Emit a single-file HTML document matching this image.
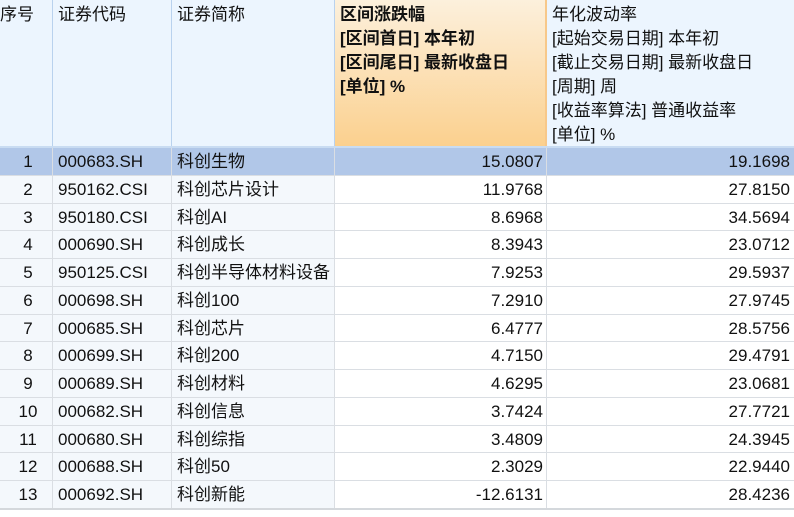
<!DOCTYPE html>
<html><head><meta charset="utf-8"><style>
*{margin:0;padding:0;box-sizing:border-box}
body{width:794px;height:517px;background:#fff;font-family:"Liberation Sans","Noto Sans CJK SC",sans-serif;font-size:17px;color:#111;position:relative;overflow:hidden}
.h{position:absolute;top:0;height:147px;background:#ecf5fe;border-right:1px solid #b9d2ee;padding:3px 5px 0 5px;line-height:24px;white-space:nowrap}
.hg{background:linear-gradient(#fcf0dc,#fbd08e);border-right:2px solid #f7c88a;font-weight:bold}
.r{position:absolute;left:0;width:794px;border-bottom:1px solid #dadee3}
.c{position:absolute;top:0;bottom:0;line-height:27px;border-right:1px solid #dadee3;padding:0 5px;white-space:nowrap}
.l{background:#f4f8fc}
.n{text-align:right}
.sel .c{background:#b1c7e8}
</style></head><body>
<div class="h" style="left:-10px;width:63px;padding-left:10px">序号</div>
<div class="h" style="left:53px;width:119px">证券代码</div>
<div class="h" style="left:172px;width:163px">证券简称</div>
<div class="h hg" style="left:335px;width:212px">区间涨跌幅<br>[区间首日] 本年初<br>[区间尾日] 最新收盘日<br>[单位] %</div>
<div class="h" style="left:547px;width:247px;border-right:none">年化波动率<br>[起始交易日期] 本年初<br>[截止交易日期] 最新收盘日<br>[周期] 周<br>[收益率算法] 普通收益率<br>[单位] %</div>
<div style="position:absolute;left:0;top:146px;width:794px;height:2px;background:#c9dcf2"></div>
<div id="rows"></div>
<script>
var d=[["1","000683.SH","科创生物","15.0807","19.1698"],["2","950162.CSI","科创芯片设计","11.9768","27.8150"],["3","950180.CSI","科创AI","8.6968","34.5694"],["4","000690.SH","科创成长","8.3943","23.0712"],["5","950125.CSI","科创半导体材料设备","7.9253","29.5937"],["6","000698.SH","科创100","7.2910","27.9745"],["7","000685.SH","科创芯片","6.4777","28.5756"],["8","000699.SH","科创200","4.7150","29.4791"],["9","000689.SH","科创材料","4.6295","23.0681"],["10","000682.SH","科创信息","3.7424","27.7721"],["11","000680.SH","科创综指","3.4809","24.3945"],["12","000688.SH","科创50","2.3029","22.9440"],["13","000692.SH","科创新能","-12.6131","28.4236"]];
var h="";
for(var i=0;i<d.length;i++){var r=d[i];var t=Math.round(148+i*27.75);var t2=Math.round(148+(i+1)*27.75);
h+='<div class="r'+(i==0?' sel':'')+'" style="top:'+t+'px;height:'+(t2-t)+'px">'+
'<div class="c l" style="left:0;width:53px;text-align:center;padding:0 0 0 4px">'+r[0]+'</div>'+
'<div class="c l" style="left:53px;width:119px">'+r[1]+'</div>'+
'<div class="c l" style="left:172px;width:163px">'+r[2]+'</div>'+
'<div class="c n" style="left:335px;width:212px;padding-right:3px">'+r[3]+'</div>'+
'<div class="c n" style="left:547px;width:247px;border-right:none;padding-right:4px">'+r[4]+'</div></div>';}
document.getElementById("rows").innerHTML=h;
</script>
<div style="position:absolute;left:0;top:508px;width:794px;height:2px;background:#d4d8dc"></div>
</body></html>
